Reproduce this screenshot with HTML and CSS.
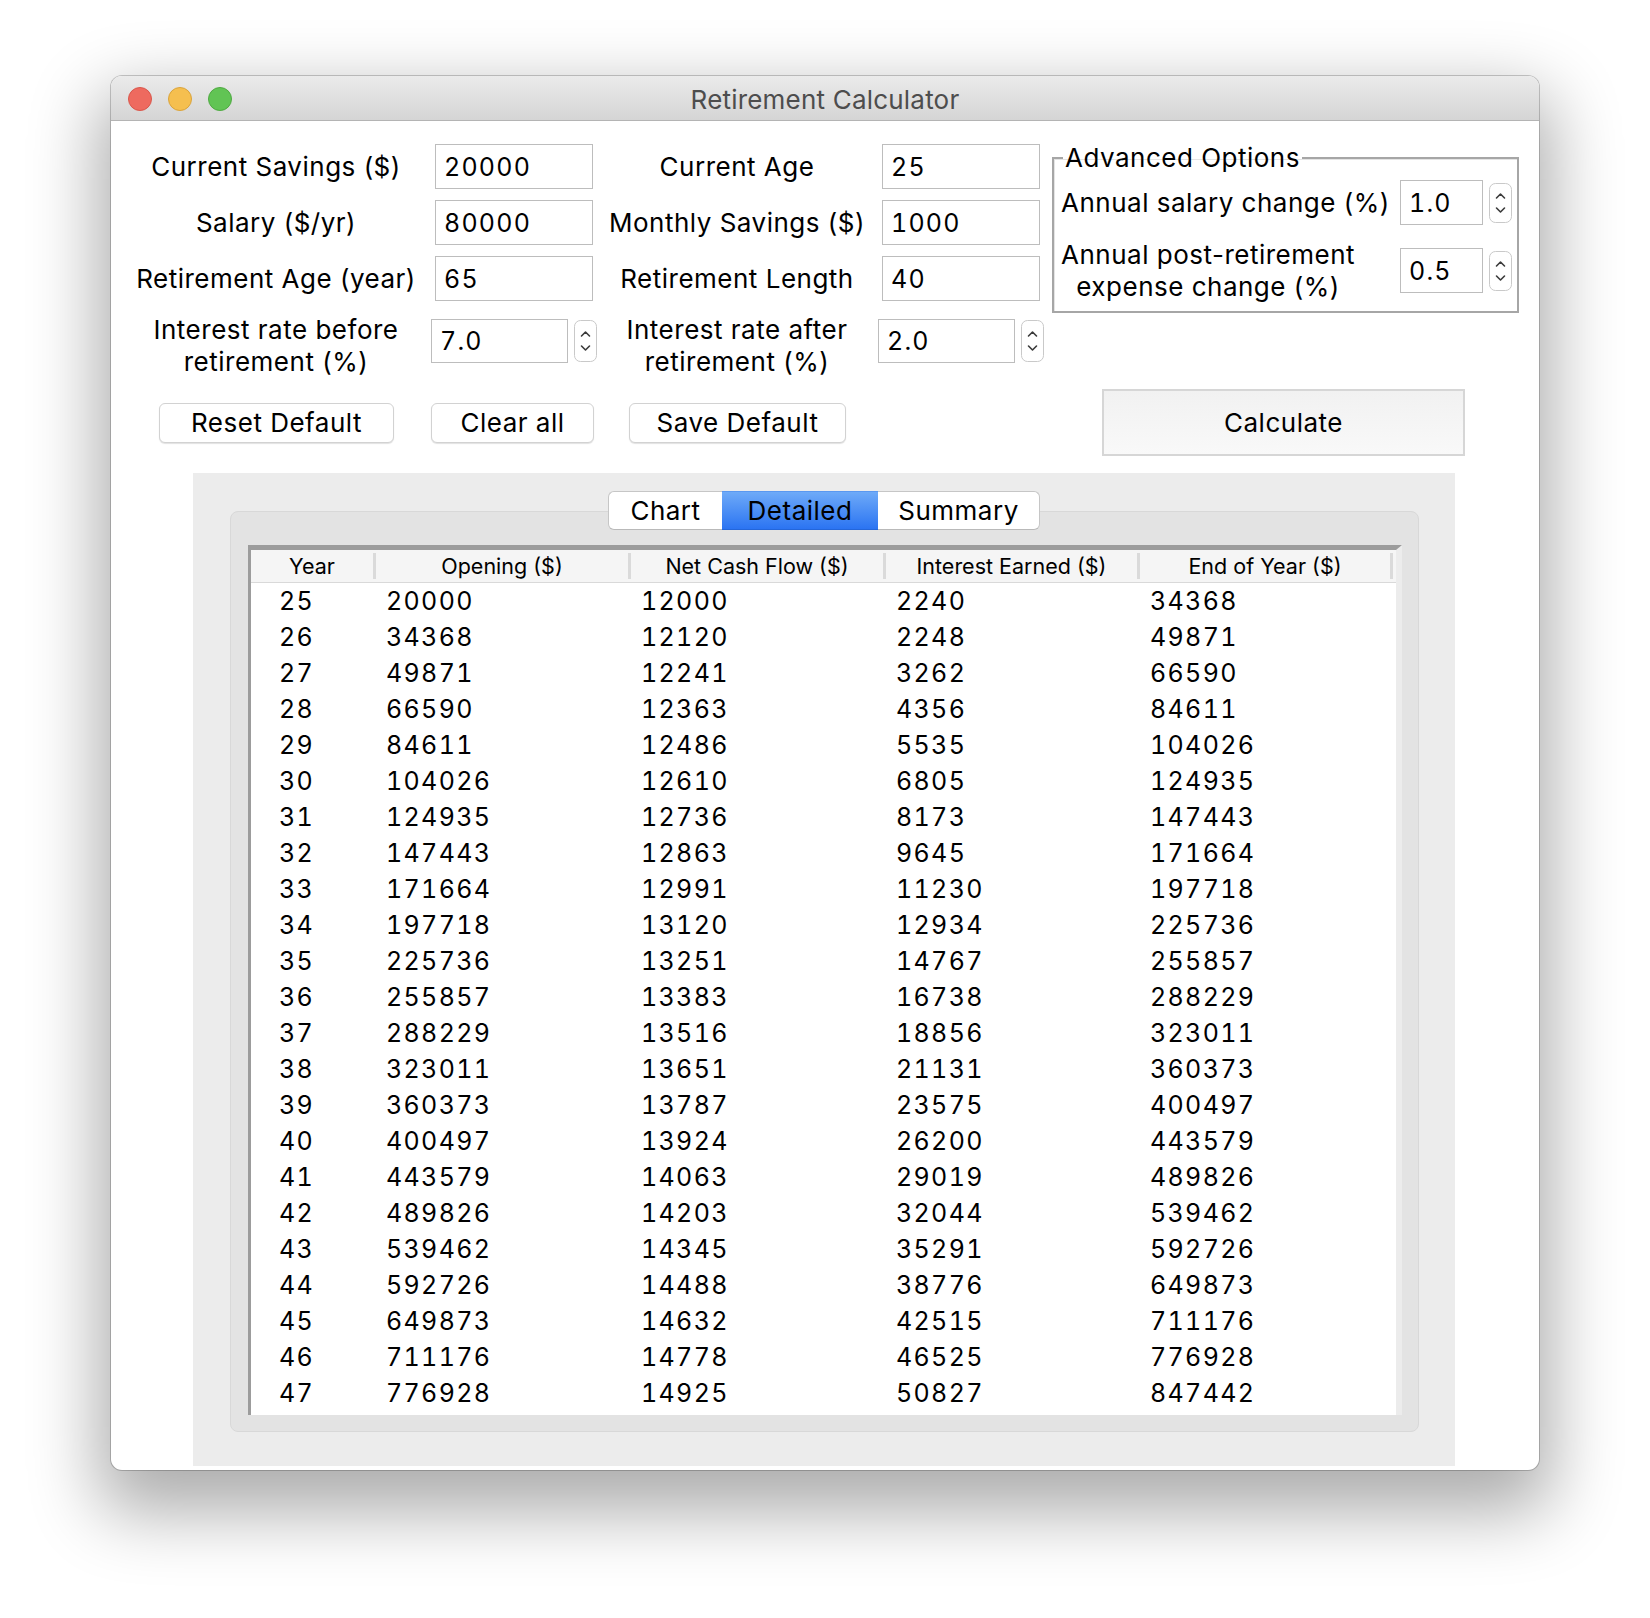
FILE: index.html
```html
<!DOCTYPE html>
<html>
<head>
<meta charset="utf-8">
<title>Retirement Calculator</title>
<link rel="stylesheet" href="styles.css">
</head>
<body>
<div class="window">
  <div class="titlebar">
    <div class="lights"><span class="light red"></span><span class="light yellow"></span><span class="light green"></span></div>
    <div class="title">Retirement Calculator</div>
    <div></div>
  </div>
  <div class="content">
    <div class="top">
      <div class="form">
        <div class="lbl">Current Savings ($)</div>
        <div class="field">20000</div>
        <div class="lbl">Current Age</div>
        <div class="field">25</div>

        <div class="lbl">Salary ($/yr)</div>
        <div class="field">80000</div>
        <div class="lbl">Monthly Savings ($)</div>
        <div class="field">1000</div>

        <div class="lbl">Retirement Age (year)</div>
        <div class="field">65</div>
        <div class="lbl">Retirement Length</div>
        <div class="field">40</div>

        <div class="lbl lbl2">Interest rate before<br>retirement (%)</div>
        <div class="spinrow"><div class="field short">7.0</div><div class="spinner"><svg viewBox="0 0 23 42" width="23" height="42"><rect x="0.5" y="0.5" width="22" height="41" rx="6" fill="#fff" stroke="#c9c9c9"/><path d="M7.5 16 L11.5 12 L15.5 16" fill="none" stroke="#3a3a3a" stroke-width="1.6" stroke-linecap="round" stroke-linejoin="round"/><path d="M7.5 26 L11.5 30 L15.5 26" fill="none" stroke="#3a3a3a" stroke-width="1.6" stroke-linecap="round" stroke-linejoin="round"/></svg></div></div>
        <div class="lbl lbl2">Interest rate after<br>retirement (%)</div>
        <div class="spinrow"><div class="field short">2.0</div><div class="spinner"><svg viewBox="0 0 23 42" width="23" height="42"><rect x="0.5" y="0.5" width="22" height="41" rx="6" fill="#fff" stroke="#c9c9c9"/><path d="M7.5 16 L11.5 12 L15.5 16" fill="none" stroke="#3a3a3a" stroke-width="1.6" stroke-linecap="round" stroke-linejoin="round"/><path d="M7.5 26 L11.5 30 L15.5 26" fill="none" stroke="#3a3a3a" stroke-width="1.6" stroke-linecap="round" stroke-linejoin="round"/></svg></div></div>
      </div>
      <fieldset class="advanced">
        <legend>Advanced Options</legend>
        <div class="adv-grid">
          <div class="adv-lbl">Annual salary change (%)</div>
          <div class="field adv-field">1.0</div>
          <div class="spinner small"><svg viewBox="0 0 23 40" width="23" height="40"><rect x="0.5" y="0.5" width="22" height="39" rx="6" fill="#fff" stroke="#c9c9c9"/><path d="M7.5 15 L11.5 11 L15.5 15" fill="none" stroke="#3a3a3a" stroke-width="1.6" stroke-linecap="round" stroke-linejoin="round"/><path d="M7.5 25 L11.5 29 L15.5 25" fill="none" stroke="#3a3a3a" stroke-width="1.6" stroke-linecap="round" stroke-linejoin="round"/></svg></div>

          <div class="adv-lbl two">Annual post-retirement<br>expense change (%)</div>
          <div class="field adv-field">0.5</div>
          <div class="spinner small"><svg viewBox="0 0 23 40" width="23" height="40"><rect x="0.5" y="0.5" width="22" height="39" rx="6" fill="#fff" stroke="#c9c9c9"/><path d="M7.5 15 L11.5 11 L15.5 15" fill="none" stroke="#3a3a3a" stroke-width="1.6" stroke-linecap="round" stroke-linejoin="round"/><path d="M7.5 25 L11.5 29 L15.5 25" fill="none" stroke="#3a3a3a" stroke-width="1.6" stroke-linecap="round" stroke-linejoin="round"/></svg></div>
        </div>
      </fieldset>
    </div>

    <div class="buttons">
      <div class="btn reset">Reset Default</div>
      <div class="btn clear">Clear all</div>
      <div class="btn save">Save Default</div>
      <div class="calc">Calculate</div>
    </div>

    <div class="panel">
      <div class="tabs">
        <div class="tab chart">Chart</div>
        <div class="tab detailed active">Detailed</div>
        <div class="tab summary">Summary</div>
      </div>
      <div class="pane">
        <div class="table">
          <div class="thead">
            <div class="th c1">Year</div>
            <div class="th">Opening ($)</div>
            <div class="th">Net Cash Flow ($)</div>
            <div class="th">Interest Earned ($)</div>
            <div class="th">End of Year ($)</div>
          </div>
          <div class="tbody">
            <div class="tr"><span class="td c1">25</span><span class="td">20000</span><span class="td">12000</span><span class="td">2240</span><span class="td">34368</span></div>
            <div class="tr"><span class="td c1">26</span><span class="td">34368</span><span class="td">12120</span><span class="td">2248</span><span class="td">49871</span></div>
            <div class="tr"><span class="td c1">27</span><span class="td">49871</span><span class="td">12241</span><span class="td">3262</span><span class="td">66590</span></div>
            <div class="tr"><span class="td c1">28</span><span class="td">66590</span><span class="td">12363</span><span class="td">4356</span><span class="td">84611</span></div>
            <div class="tr"><span class="td c1">29</span><span class="td">84611</span><span class="td">12486</span><span class="td">5535</span><span class="td">104026</span></div>
            <div class="tr"><span class="td c1">30</span><span class="td">104026</span><span class="td">12610</span><span class="td">6805</span><span class="td">124935</span></div>
            <div class="tr"><span class="td c1">31</span><span class="td">124935</span><span class="td">12736</span><span class="td">8173</span><span class="td">147443</span></div>
            <div class="tr"><span class="td c1">32</span><span class="td">147443</span><span class="td">12863</span><span class="td">9645</span><span class="td">171664</span></div>
            <div class="tr"><span class="td c1">33</span><span class="td">171664</span><span class="td">12991</span><span class="td">11230</span><span class="td">197718</span></div>
            <div class="tr"><span class="td c1">34</span><span class="td">197718</span><span class="td">13120</span><span class="td">12934</span><span class="td">225736</span></div>
            <div class="tr"><span class="td c1">35</span><span class="td">225736</span><span class="td">13251</span><span class="td">14767</span><span class="td">255857</span></div>
            <div class="tr"><span class="td c1">36</span><span class="td">255857</span><span class="td">13383</span><span class="td">16738</span><span class="td">288229</span></div>
            <div class="tr"><span class="td c1">37</span><span class="td">288229</span><span class="td">13516</span><span class="td">18856</span><span class="td">323011</span></div>
            <div class="tr"><span class="td c1">38</span><span class="td">323011</span><span class="td">13651</span><span class="td">21131</span><span class="td">360373</span></div>
            <div class="tr"><span class="td c1">39</span><span class="td">360373</span><span class="td">13787</span><span class="td">23575</span><span class="td">400497</span></div>
            <div class="tr"><span class="td c1">40</span><span class="td">400497</span><span class="td">13924</span><span class="td">26200</span><span class="td">443579</span></div>
            <div class="tr"><span class="td c1">41</span><span class="td">443579</span><span class="td">14063</span><span class="td">29019</span><span class="td">489826</span></div>
            <div class="tr"><span class="td c1">42</span><span class="td">489826</span><span class="td">14203</span><span class="td">32044</span><span class="td">539462</span></div>
            <div class="tr"><span class="td c1">43</span><span class="td">539462</span><span class="td">14345</span><span class="td">35291</span><span class="td">592726</span></div>
            <div class="tr"><span class="td c1">44</span><span class="td">592726</span><span class="td">14488</span><span class="td">38776</span><span class="td">649873</span></div>
            <div class="tr"><span class="td c1">45</span><span class="td">649873</span><span class="td">14632</span><span class="td">42515</span><span class="td">711176</span></div>
            <div class="tr"><span class="td c1">46</span><span class="td">711176</span><span class="td">14778</span><span class="td">46525</span><span class="td">776928</span></div>
            <div class="tr"><span class="td c1">47</span><span class="td">776928</span><span class="td">14925</span><span class="td">50827</span><span class="td">847442</span></div>
          </div>
        </div>
      </div>
    </div>
  </div>
</div>
</body>
</html>
```

FILE: styles.css
```css
* { box-sizing: border-box; }

html, body { height: 100%; }

body {
  margin: 0;
  padding: 76px 0 0 111px;
  background: #ffffff;
  font-family: Inter, "Liberation Sans", sans-serif;
  color: #000;
  overflow: hidden;
}

.window {
  width: 1428px;
  height: 1394px;
  background: #fff;
  border-radius: 11px;
  box-shadow: 0 0 0 1px rgba(0,0,0,0.2), 0 30px 70px 12px rgba(0,0,0,0.33);
  overflow: hidden;
  display: flex;
  flex-direction: column;
}

.titlebar {
  flex: none;
  height: 45px;
  padding-top: 2px;
  background: linear-gradient(#ebebeb, #d5d5d5);
  border-bottom: 1px solid #b4b4b4;
  display: grid;
  grid-template-columns: 1fr auto 1fr;
  align-items: center;
}

.lights { display: flex; gap: 16px; padding-left: 17px; }
.light { width: 24px; height: 24px; border-radius: 50%; }
.red { background: #ee6a5f; border: 1px solid #d8574c; }
.yellow { background: #f5bf4f; border: 1px solid #d9a33c; }
.green { background: #61c454; border: 1px solid #4fa942; }

.title { font-size: 26px; color: #4d4d4d; letter-spacing: 0.2px; }

.content { flex: 1; padding: 23px 0 0 15px; }

.top { display: flex; align-items: flex-start; }

.form {
  display: grid;
  grid-template-columns: 305px 170px 277px 170px;
  grid-template-rows: 45px 45px 45px 64px;
  row-gap: 11px;
}

.lbl {
  font-size: 26px;
  line-height: 31.6px;
  text-align: center;
  align-self: center;
  padding-right: 5px;
  letter-spacing: 0.5px;
  white-space: nowrap;
}
.lbl2 { align-self: start; margin-top: 2px; }

.field {
  width: 158px;
  height: 45px;
  margin-left: 4px;
  border: 1px solid #bdbdbd;
  background: #fff;
  font-size: 25px;
  padding-left: 8px;
  display: flex;
  align-items: center;
  letter-spacing: 1.2px;
  font-variant-numeric: tabular-nums;
}

.spinrow {
  display: flex;
  align-items: center;
  gap: 6px;
  align-self: start;
  margin-top: 7px;
}
.field.short { width: 137px; height: 44px; margin-left: 0; }
.spinner { display: flex; flex: none; }
.spinner svg { display: block; flex: none; }

.advanced {
  margin: -1px 0 0 4px;
  padding: 0 5px 18px 7px;
  width: 467px;
  border: 2px solid #a6a6a6;
  box-shadow: inset 1px 1px 0 #e4e4e4;
  position: relative;
}
.advanced legend {
  font-size: 26px;
  line-height: 30px;
  padding: 0 2px;
  margin-left: 2px;
  letter-spacing: 0.5px;
}

.adv-grid {
  display: grid;
  grid-template-columns: 339px 83px 29px;
  grid-template-rows: 45px 45px;
  row-gap: 23px;
  margin-top: 7px;
  align-items: center;
}
.adv-lbl {
  font-size: 26px;
  line-height: 31.6px;
  justify-self: start;
  text-align: center;
  letter-spacing: 0.5px;
  white-space: nowrap;
}
.adv-field { width: 83px; margin-left: 0; }
.spinner.small { margin-left: 6px; }

.buttons {
  display: flex;
  align-items: center;
  height: 67px;
  margin-top: 13px;
}
.btn {
  height: 40px;
  background: #fff;
  border: 1px solid #d2d2d2;
  border-radius: 6px;
  box-shadow: 0 1px 1px rgba(0,0,0,0.12);
  font-size: 26px;
  letter-spacing: 0.5px;
  display: flex;
  align-items: center;
  justify-content: center;
}
.reset { width: 235px; margin-left: 33px; }
.clear { width: 163px; margin-left: 37px; }
.save { width: 217px; margin-left: 35px; }
.calc {
  width: 363px;
  height: 67px;
  margin-left: 256px;
  background: linear-gradient(#f1f1f1, #f9f9f9);
  border: 2px solid #d6d6d6;
  font-size: 26px;
  letter-spacing: 0.5px;
  display: flex;
  align-items: center;
  justify-content: center;
}

.panel {
  margin: 17px 0 0 67px;
  width: 1262px;
  height: 993px;
  background: #ececec;
  padding-top: 18px;
}

.tabs {
  display: flex;
  justify-content: center;
  position: relative;
  z-index: 1;
}
.tabs .tab {
  height: 39px;
  font-size: 26px;
  letter-spacing: 0.5px;
  display: flex;
  align-items: center;
  justify-content: center;
  background: #fff;
  border-top: 1px solid #c6c6c6;
  border-bottom: 1px solid #b9b9b9;
}
.tab.chart { width: 114px; border-left: 1px solid #c6c6c6; border-radius: 6px 0 0 6px; }
.tab.detailed { width: 156px; }
.tab.summary { width: 162px; border-right: 1px solid #c6c6c6; border-radius: 0 6px 6px 0; }
.tab.active {
  background: linear-gradient(#6eaaf8, #2b74f2);
  border-top-color: #5a98f0;
  border-bottom-color: #2466da;
}

.pane {
  margin: -19px 0 0 37px;
  width: 1189px;
  height: 921px;
  background: #e3e3e3;
  border: 1px solid #d8d8d8;
  border-radius: 8px;
  padding: 33px 0 0 17px;
}

.table {
  width: 1154px;
  height: 870px;
  background: #fff;
  border-top: 5px solid #9c9c9c;
  border-left: 3px solid #9c9c9c;
  border-right: 6px solid #ececec;
  overflow: hidden;
}

.thead {
  display: grid;
  grid-template-columns: 125px 255px 255px 254px 253px;
  height: 33px;
  background: #f5f5f5;
  border-bottom: 1px solid #d9d9d9;
}
.th {
  font-size: 21.5px;
  display: flex;
  align-items: center;
  justify-content: center;
  border-right: 3px solid #dadada;
  margin: 3px 0;
}

.tbody { display: flex; flex-direction: column; }
.tr {
  display: grid;
  grid-template-columns: 125px 255px 255px 254px 253px;
  height: 36px;
  align-items: center;
}
.td {
  font-size: 25px;
  letter-spacing: 1.35px;
  padding-left: 10px;
  font-variant-numeric: tabular-nums;
}
.td.c1 { padding-left: 28px; }
```
